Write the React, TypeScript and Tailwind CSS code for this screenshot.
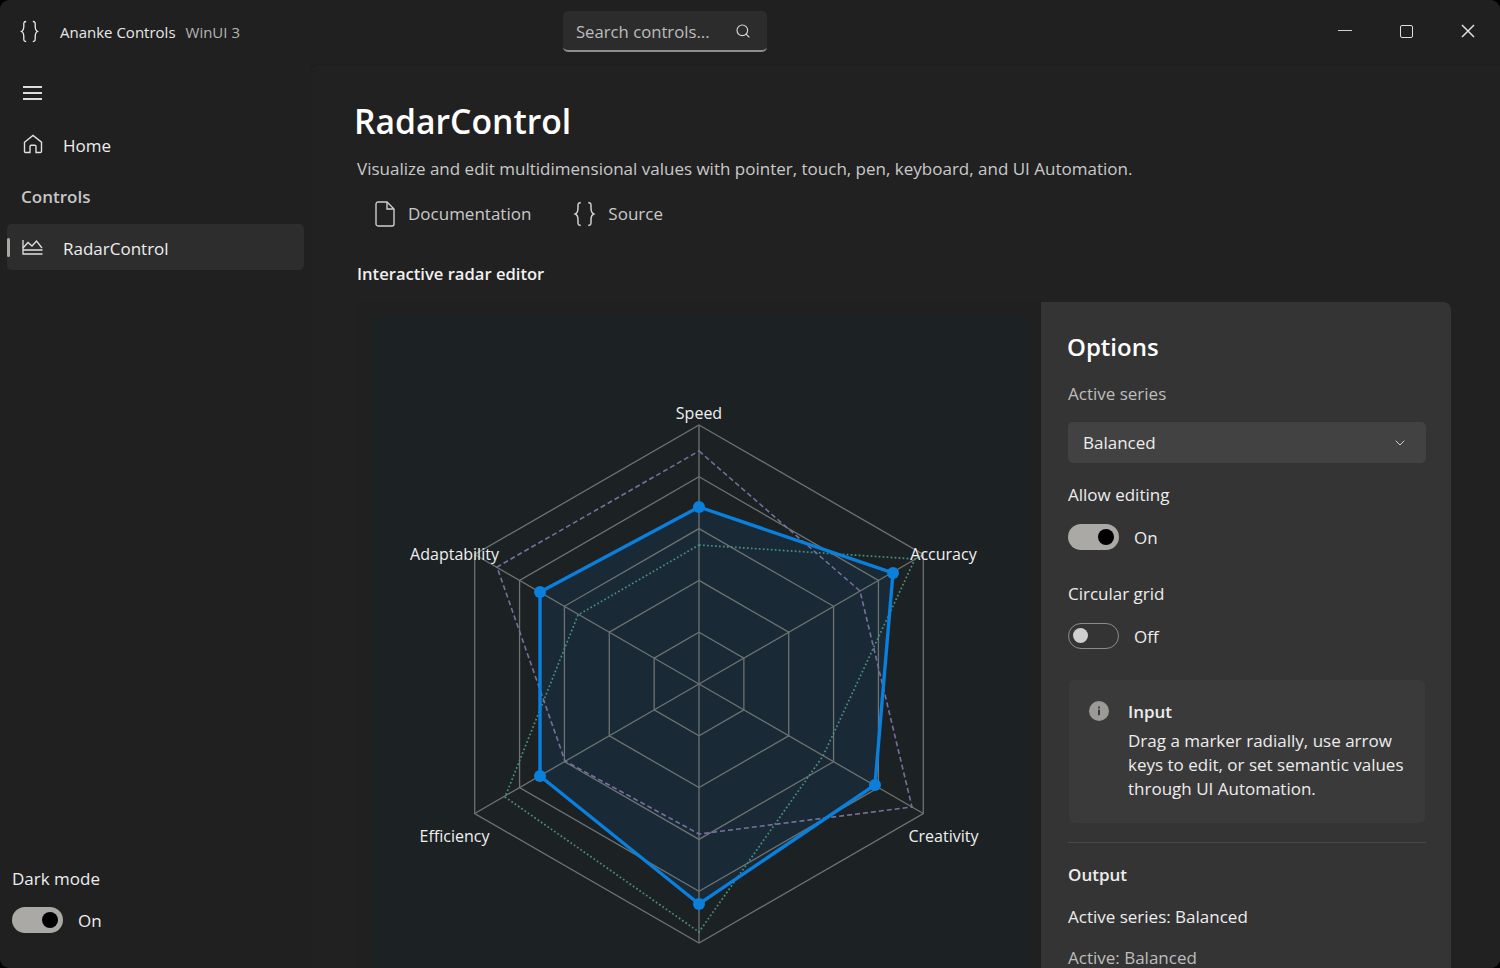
import { ChevronDown, Search } from "lucide-react"

const center = { x: 699, y: 684 }
const dirs = [
    [0, -1],
    [0.866, -0.5],
    [0.866, 0.5],
    [0, 1],
    [-0.866, 0.5],
    [-0.866, -0.5],
]
const rings = [259, 207.2, 155.4, 103.6, 51.8]

const ringPoints = (r: number) =>
    dirs.map(([dx, dy]) => `${center.x + dx * r},${center.y + dy * r}`).join(" ")

const active = [[699, 507], [893, 573], [875, 785], [699, 904], [540, 776], [540, 592]]
const purple = "699,451 860,591 912,807 699,834 565,761 497,567"
const green = "699,545 915,559 823,756 699,932 505,797 578,615"

const labels = [
    { text: "Speed", x: 699, y: 419 },
    { text: "Accuracy", x: 943.5, y: 560 },
    { text: "Creativity", x: 943.5, y: 842 },
    { text: "Efficiency", x: 454.5, y: 842 },
    { text: "Adaptability", x: 454.5, y: 560 },
]

function Braces({ className }: { className?: string }) {
    return (
        <svg viewBox="0 0 20 24" fill="none" stroke="currentColor" strokeWidth="1.4" className={className}>
            <path d="M6.5 1.5C3.5 1.5 4 3.5 4 6.5C4 9.5 3.8 11 1.5 12C3.8 13 4 14.5 4 17.5C4 20.5 3.5 22.5 6.5 22.5" />
            <path d="M13.5 1.5C16.5 1.5 16 3.5 16 6.5C16 9.5 16.2 11 18.5 12C16.2 13 16 14.5 16 17.5C16 20.5 16.5 22.5 13.5 22.5" />
        </svg>
    )
}

function Toggle({ on, label }: { on: boolean; label: string }) {
    return (
        <div className="flex items-center">
            <div
                className={`w-[51px] h-[26px] rounded-full flex items-center ${
                    on
                        ? "bg-[#aaa9a5] justify-end pr-[5px]"
                        : "border-[1.5px] border-[#8b8b8b] justify-start pl-[4px]"
                }`}
            >
                <div className={on ? "w-4 h-4 rounded-full bg-black" : "w-[15px] h-[15px] rounded-full bg-[#cfcfcf]"} />
            </div>
            <span className="ml-[15px] mt-[3px]">{label}</span>
        </div>
    )
}

function Radar() {
    return (
        <svg viewBox="373 317 657 700" className="w-[657px] h-[700px] block">
            <polygon points={active.map(p => p.join(",")).join(" ")} fill="#0078d4" fillOpacity="0.1" />
            {rings.map(r => (
                <polygon key={r} points={ringPoints(r)} fill="none" stroke="#6d7272" strokeWidth="1.3" />
            ))}
            {dirs.map(([dx, dy], i) => (
                <line
                    key={i}
                    x1={center.x}
                    y1={center.y}
                    x2={center.x + dx * 259}
                    y2={center.y + dy * 259}
                    stroke="#6d7272"
                    strokeWidth="1.3"
                />
            ))}
            <polygon points={purple} fill="none" stroke="#77709f" strokeWidth="1.6" strokeDasharray="5 3" />
            <polygon points={green} fill="none" stroke="#4a9080" strokeWidth="1.7" strokeDasharray="1.7 2.3" />
            <polygon points={active.map(p => p.join(",")).join(" ")} fill="none" stroke="#0a7fdc" strokeWidth="3.4" />
            {active.map(([x, y], i) => (
                <circle key={i} cx={x} cy={y} r="6" fill="#0a7fdc" />
            ))}
            {labels.map(l => (
                <text key={l.text} x={l.x} y={l.y} textAnchor="middle" fontSize="16" fill="#f0f0f0">
                    {l.text}
                </text>
            ))}
        </svg>
    )
}

export default function App() {
    return (
        <div className="w-[1500px] h-[968px] bg-black overflow-hidden font-['Open_Sans',sans-serif] text-[17px] leading-6 text-[#ededed]">
            <div className="w-full h-full rounded-[9px] overflow-hidden bg-[#202020] flex flex-col">
                {/* title bar */}
                <div className="h-[64px] shrink-0 flex items-start">
                    <Braces className="w-[19px] h-[23px] mt-[20px] ml-[20px] mr-[21px] text-[#e8e8e8]" />
                    <span className="text-[15px] text-[#e8e8e8] mt-[20px]">Ananke Controls</span>
                    <span className="text-[15px] text-[#b5b5b5] ml-[10px] mt-[20px]">WinUI 3</span>
                    <div className="ml-[323px] mt-[11px] w-[204px] h-[41px] bg-[#2c2c2c] rounded-[5px] border-b-2 border-[#8e8e8e] flex items-center justify-between pl-[13px] pr-[16px]">
                        <span className="text-[16.7px] text-[#bdbdbd] mt-[2px]">Search controls...</span>
                        <Search size={16} strokeWidth={1.7} className="text-[#d8d8d8]" />
                    </div>
                    <div className="ml-auto mt-[24px] flex items-start gap-[48px] pr-[25px] text-[#dedede]">
                        <div className="w-[14px] h-[1.5px] bg-[#cfcfcf] mt-[5.5px]" />
                        <div className="w-[13px] h-[13px] mt-[1px] border-[1.5px] border-[#dedede] rounded-[2px]" />
                        <svg viewBox="0 0 14 14" className="w-[14px] h-[14px]" stroke="currentColor" strokeWidth="1.5">
                            <path d="M1 1L13 13M13 1L1 13" />
                        </svg>
                    </div>
                </div>

                <div className="flex-1 flex min-h-0">
                    {/* sidebar */}
                    <div className="w-[310px] shrink-0 flex flex-col">
                        <div className="pl-[23px] pt-[22px]">
                            <div className="w-[19px] flex flex-col gap-[4.5px]">
                                <div className="h-[1.5px] bg-[#dcdcdc]" />
                                <div className="h-[1.5px] bg-[#dcdcdc]" />
                                <div className="h-[1.5px] bg-[#dcdcdc]" />
                            </div>
                        </div>
                        <div className="flex items-center mt-[34px] pl-[23px] h-6">
                            <svg viewBox="0 0 20 20" fill="none" stroke="#e0e0e0" strokeWidth="1.4" className="w-5 h-5 mt-[-4px]">
                                <path d="M1.5 8.2L10 1.5L18.5 8.2V17.3C18.5 18 18 18.5 17.3 18.5H13V12.5C13 11.8 12.5 11.3 11.8 11.3H8.2C7.5 11.3 7 11.8 7 12.5V18.5H2.7C2 18.5 1.5 18 1.5 17.3Z" />
                            </svg>
                            <span className="ml-[20px]">Home</span>
                        </div>
                        <div className="pl-[21px] mt-[27px] font-semibold text-[#c6c6c6]">Controls</div>
                        <div className="mx-[7px] w-[297px] mt-[15px] h-[46px] bg-[#2d2d2d] rounded-[5px] flex items-center relative">
                            <div className="absolute left-0 top-[14px] w-[3px] h-[19px] bg-[#a8a8a4] rounded-full" />
                            <svg viewBox="0 0 21 16" fill="none" stroke="#e0e0e0" strokeWidth="1.3" className="w-[21px] h-4 ml-[15px]">
                                <path d="M1 1V15H20.5" />
                                <path d="M1 9L6 3.5L10 7L14.5 2L20 9" />
                                <path d="M1 11H20.5" />
                            </svg>
                            <span className="ml-[20px] mt-[4px]">RadarControl</span>
                        </div>
                        <div className="mt-auto pl-[12px] pb-[35px]">
                            <div>Dark mode</div>
                            <div className="mt-[15px]">
                                <Toggle on label="On" />
                            </div>
                        </div>
                    </div>

                    {/* main */}
                    <div className="flex-1 min-w-0 bg-[#212121] pl-[46px] overflow-hidden border-l border-t border-[#1e1e1e] rounded-tl-lg">
                        <div className="mt-[34px] ml-[-3px] h-[44px] text-[33.7px] leading-[44px] font-semibold text-white">RadarControl</div>
                        <div className="mt-[14px] text-[#c9c9c9]">
                            Visualize and edit multidimensional values with pointer, touch, pen, keyboard, and UI Automation.
                        </div>
                        <div className="mt-[18px] h-[30px] flex items-center text-[#c9c9c9]">
                            <svg viewBox="0 0 20 26" fill="none" stroke="#cfcfcf" strokeWidth="1.4" className="w-5 h-[26px] ml-[18px]">
                                <path d="M3 1H12L19 8V23C19 24 18 25 17 25H3C2 25 1 24 1 23V3C1 2 2 1 3 1Z" />
                                <path d="M12 1V8H19" />
                            </svg>
                            <span className="ml-[13px]">Documentation</span>
                            <Braces className="w-[23px] h-[26px] ml-[42px] text-[#cfcfcf]" />
                            <span className="ml-[12px]">Source</span>
                        </div>
                        <div className="mt-[33px] text-[16.6px] font-semibold text-[#f0f0f0]">Interactive radar editor</div>
                        <div className="mt-[16px] w-[1094px] flex rounded-lg bg-[#202020]">
                            <div className="w-[684px] shrink-0 pl-[16px] pt-[15px]">
                                <div className="w-[657px] bg-[#1c2224]">
                                    <Radar />
                                </div>
                            </div>
                            <div className="flex-1 bg-[#343434] rounded-r-lg pl-[27px] pr-[25px] pt-[26px]">
                                <div className="h-[38px] ml-[-1px] text-[24px] leading-[38px] font-semibold text-white">Options</div>
                                <div className="mt-[16px] text-[#bdbdbd]">Active series</div>
                                <div className="mt-[16px] h-[41px] bg-[#424242] rounded-[5px] flex items-center justify-between pl-[15px] pr-[18px]">
                                    <span>Balanced</span>
                                    <ChevronDown size={16} strokeWidth={1.5} className="text-[#cfcfcf]" />
                                </div>
                                <div className="mt-[20px]">Allow editing</div>
                                <div className="mt-[16px]">
                                    <Toggle on label="On" />
                                </div>
                                <div className="mt-[32px]">Circular grid</div>
                                <div className="mt-[16px]">
                                    <Toggle on={false} label="Off" />
                                </div>
                                <div className="mt-[31px] mx-[1px] h-[143px] bg-[#3a3a3a] rounded-[6px] flex pl-[20px] pt-[20px]">
                                    <svg viewBox="0 0 20 20" className="w-5 h-5 shrink-0 mt-[1px]">
                                        <circle cx="10" cy="10" r="10" fill="#9b9a97" />
                                        <rect x="9.1" y="8.6" width="1.8" height="5.6" fill="#343434" />
                                        <rect x="9.1" y="5.6" width="1.8" height="1.8" fill="#343434" />
                                    </svg>
                                    <div className="ml-[19px] w-[285px]">
                                        <div className="font-semibold">Input</div>
                                        <div className="mt-[5px]">
                                            Drag a marker radially, use arrow keys to edit, or set semantic values through UI Automation.
                                        </div>
                                    </div>
                                </div>
                                <div className="mt-[19px] h-px bg-[#494949]" />
                                <div className="mt-[20px] font-semibold">Output</div>
                                <div className="mt-[18px]">Active series: Balanced</div>
                                <div className="mt-[17px] text-[#bdbdbd]">Active: Balanced</div>
                                <div className="h-[60px]" />
                            </div>
                        </div>
                    </div>
                </div>
            </div>
        </div>
    )
}
